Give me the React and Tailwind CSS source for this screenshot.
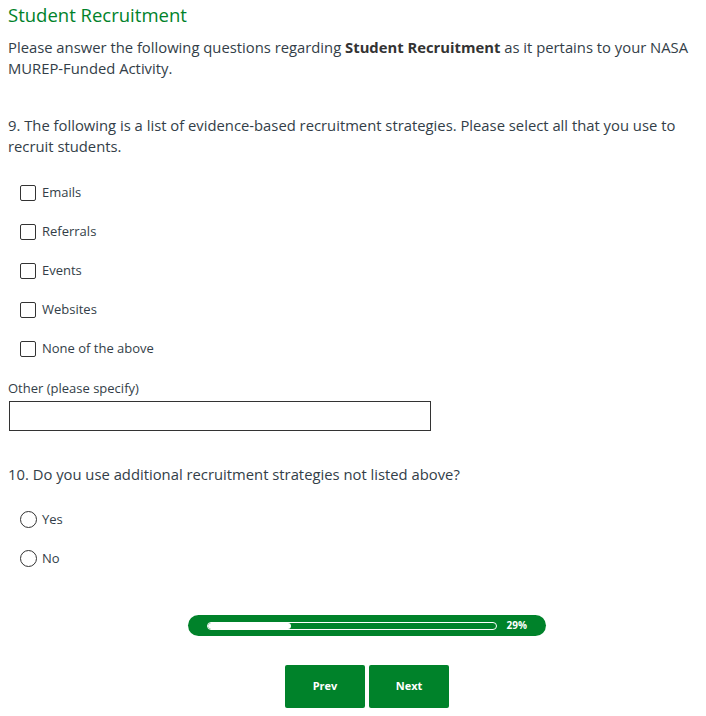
import React, { useState } from 'react';

const options = ['Emails', 'Referrals', 'Events', 'Websites', 'None of the above'];

const Checkbox = ({ label, checked, onChange }) => (
  <label className="flex items-center h-[39px] pl-3 cursor-pointer">
    <span className="w-4 h-4 border-[1.5px] border-[#333] rounded-[2px] bg-white flex items-center justify-center text-[11px] leading-none text-[#00822a]">
      {checked ? '✓' : ''}
    </span>
    <input type="checkbox" className="hidden" checked={checked} onChange={onChange} />
    <span className="ml-[6px] text-[13px] text-[#333e48]">{label}</span>
  </label>
);

const Radio = ({ label, checked, onChange }) => (
  <label className="flex items-center h-[39px] pl-3 cursor-pointer">
    <span className="w-[17px] h-[17px] border-[1.5px] border-[#333] rounded-full bg-white flex items-center justify-center">
      {checked && <span className="w-2 h-2 rounded-full bg-[#00822a]" />}
    </span>
    <input type="radio" className="hidden" checked={checked} onChange={onChange} />
    <span className="ml-[5px] text-[13px] text-[#333e48]">{label}</span>
  </label>
);

export default function App() {
  const [picked, setPicked] = useState({});
  const [other, setOther] = useState('');
  const [extra, setExtra] = useState(null);

  const toggle = (opt) => setPicked((p) => ({ ...p, [opt]: !p[opt] }));

  return (
    <div className="min-h-screen bg-white px-2 font-['Open_Sans',sans-serif] text-[#333e48]">
      <h1 className="pt-[3px] text-[18.5px] leading-6 text-[#00822a]">Student Recruitment</h1>

      <p className="mt-[10px] text-[14.8px] leading-[21px]">
        Please answer the following questions regarding <strong className="font-bold text-[#333]">Student Recruitment</strong> as it pertains to your NASA MUREP-Funded Activity.
      </p>

      {/* Question 9 */}
      <p className="mt-9 text-[14.8px] leading-[21px]">
        9. The following is a list of evidence-based recruitment strategies. Please select all that you use to recruit students.
      </p>
      <div className="mt-4">
        {options.map((opt) => (
          <Checkbox key={opt} label={opt} checked={!!picked[opt]} onChange={() => toggle(opt)} />
        ))}
      </div>

      <div className="mt-[11px] text-[13px] leading-[18px]">Other (please specify)</div>
      <input
        value={other}
        onChange={(e) => setOther(e.target.value)}
        className="mt-1 ml-px block w-[422px] h-[30px] border border-[#333] px-2 text-[13px] outline-none"
      />

      {/* Question 10 */}
      <p className="mt-[33px] text-[14.8px] leading-[21px]">
        10. Do you use additional recruitment strategies not listed above?
      </p>
      <div className="mt-[15px]">
        <Radio label="Yes" checked={extra === 'yes'} onChange={() => setExtra('yes')} />
        <Radio label="No" checked={extra === 'no'} onChange={() => setExtra('no')} />
      </div>

      {/* Progress */}
      <div className="mt-[37px] pl-7 flex justify-center">
        <div className="w-[358px] h-[21px] rounded-full bg-[#00822a] flex items-center pl-[19px] pr-[19px]">
          <div className="w-[290px] h-[8px] rounded-full border border-white overflow-hidden">
            <div className="w-[83px] h-full bg-white rounded-full" />
          </div>
          <span className="ml-[10px] text-[10px] font-bold text-white">29%</span>
        </div>
      </div>

      {/* Nav buttons */}
      <div className="mt-[29px] pl-7 flex justify-center gap-1 pb-2">
        <button className="w-20 h-[43px] rounded-[2px] bg-[#00822a] text-white text-[11px] font-bold">Prev</button>
        <button className="w-20 h-[43px] rounded-[2px] bg-[#00822a] text-white text-[11px] font-bold">Next</button>
      </div>
    </div>
  );
}
